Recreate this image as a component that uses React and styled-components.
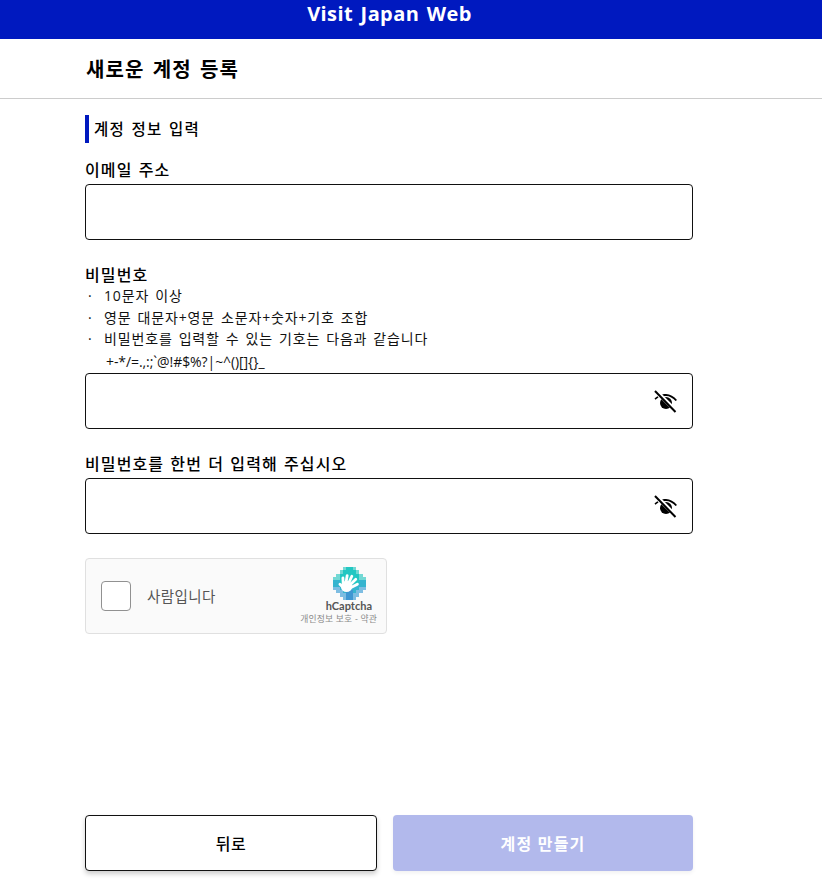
import React from 'react';
import styled, { createGlobalStyle } from 'styled-components';

const GlobalStyle = createGlobalStyle`
    html, body {
        margin: 0;
        padding: 0;
        background: #fff;
        color: #000;
        font-family: 'Open Sans', 'Noto Sans CJK KR', sans-serif;
    }
`;

const Page = styled.div`
    width: 822px;
    height: 892px;
    display: flex;
    flex-direction: column;
    overflow: hidden;
`;

const Banner = styled.header`
    height: 39px;
    flex: none;
    background: #0019bf;
    color: #fff;
    display: flex;
    justify-content: center;
    box-sizing: border-box;
    padding: 0 43px 0 0;
    font-size: 20px;
    line-height: 27px;
    font-weight: 700;
    letter-spacing: 0.4px;
    word-spacing: 2px;
`;

const TitleBar = styled.div`
    height: 60px;
    flex: none;
    box-sizing: border-box;
    border-bottom: 1px solid #cccccc;
    padding: 0 85px 0 86px;
    display: flex;
    align-items: center;
    font-size: 20px;
    font-weight: 700;
    letter-spacing: 1.1px;
    word-spacing: 2px;
`;

const Form = styled.main`
    flex: 1;
    width: 608px;
    margin-left: 85px;
    padding-top: 16px;
    display: flex;
    flex-direction: column;
`;

const SectionTitle = styled.h2`
    margin: 0 0 17px;
    height: 28px;
    border-left: 4px solid #0019bf;
    padding-left: 5px;
    font-size: 15.5px;
    line-height: 28px;
    font-weight: 500;
    letter-spacing: 1.3px;
    word-spacing: 1px;
`;

const Field = styled.div`
    margin-bottom: ${p => p.$gap}px;
    display: flex;
    flex-direction: column;
`;

const Label = styled.label`
    height: 20px;
    font-size: 16px;
    line-height: 20px;
    font-weight: 500;
    letter-spacing: 1.1px;
    word-spacing: 1px;
    white-space: nowrap;
`;

const InputBox = styled.div`
    height: 56px;
    margin-top: 4px;
    box-sizing: border-box;
    border: 1px solid #111;
    border-radius: 4px;
    display: flex;
    align-items: center;
    justify-content: flex-end;
    padding-right: 15px;
`;

const HintList = styled.ul`
    list-style: none;
    margin: 0;
    padding: 0;
    height: 84px;
    font-size: 14px;
    line-height: 21.5px;
    color: #111;
`;

const Hint = styled.li`
    display: flex;
    white-space: nowrap;
    letter-spacing: 0.85px;
    word-spacing: 1.5px;
    &::before {
        content: '·';
        width: 19px;
        padding-left: 3px;
        box-sizing: border-box;
        flex: none;
    }
`;

const Symbols = styled.li`
    padding-left: 21px;
    line-height: 24px;
    font-size: 14px;
    letter-spacing: -0.08px;
    white-space: nowrap;
`;

const Captcha = styled.div`
    width: 302px;
    height: 76px;
    box-sizing: border-box;
    border: 1px solid #e0e0e0;
    border-radius: 4px;
    background: #fafafa;
    display: flex;
    align-items: center;
    padding: 0 9px 0 15px;
`;

const CheckBox = styled.div`
    width: 30px;
    height: 30px;
    box-sizing: border-box;
    border: 1px solid #919191;
    border-radius: 4px;
    background: #fff;
    flex: none;
`;

const CaptchaLabel = styled.span`
    margin: 0 0 2px 16px;
    flex: 1;
    font-size: 14.5px;
    color: #555;
    letter-spacing: 0.4px;
`;

const CaptchaBrand = styled.div`
    align-self: flex-start;
    display: flex;
    flex-direction: column;
    align-items: flex-end;
    padding-top: 8px;
`;

const LogoWrap = styled.div`
    width: 33px;
    height: 33px;
    margin-right: 11px;
`;

const BrandName = styled.span`
    font-family: 'Lato', 'Open Sans', sans-serif;
    font-size: 11px;
    line-height: 12px;
    margin-right: 5px;
    font-weight: 700;
    color: #555;
`;

const BrandLinks = styled.span`
    font-size: 8.8px;
    line-height: 12px;
    margin-top: 1px;
    color: #8a8a8a;
    white-space: nowrap;
    letter-spacing: 0.2px;
`;

const ButtonRow = styled.div`
    margin-top: auto;
    margin-bottom: 21px;
    display: flex;
    gap: 16px;
`;

const Button = styled.button`
    height: 56px;
    box-sizing: border-box;
    width: ${p => (p.$primary ? '300px' : '292px')};
    border: ${p => (p.$primary ? 'none' : '1px solid #111')};
    border-radius: 4px;
    background: ${p => (p.$primary ? '#b2b9ec' : '#fff')};
    color: ${p => (p.$primary ? '#fff' : '#000')};
    font-family: inherit;
    font-size: 16px;
    font-weight: ${p => (p.$primary ? 700 : 500)};
    letter-spacing: ${p => (p.$primary ? '1.2px' : '0.5px')};
    box-shadow: ${p => (p.$primary ? '0 2px 4px rgba(0,0,0,0.06)' : '0 3px 5px rgba(0,0,0,0.2)')};
    padding: 0;
`;

const EyeOff = () => (
    <svg width="24" height="24" viewBox="0 0 24 24" aria-hidden="true">
        <path d="M7 6.500C9 5.300 11 5 13 5c4 0 8 2.400 11 6l-1.400 1C20 9 16.500 7 13 7c-1.500 0-3 .3-4.500 1z" fill="#000" />
        <path d="M1.500 9.500C2.500 8.500 3.500 7.800 4.500 7.200l1 1.300c-1 .6-2 1.300-3 2.300z" fill="#000" />
        <circle cx="13" cy="14" r="6" fill="#000" />
        <path d="M3 2 L24 23" stroke="#fff" strokeWidth="4" />
        <path d="M2 2 L22.500 23" stroke="#000" strokeWidth="2" />
    </svg>
);

// pixelated mark, one letter per block
const LOGO_ROWS = [
    '...abba...',
    '..abbbba..',
    '.abbbbbba.',
    'aabbbbbbaa',
    'ccbbbbbbcc',
    'ccccbbcccc',
    'ddccccccdd',
    '.ddceecdd.',
    '..ddeedd..',
    '...deed...',
];
const LOGO_COLORS = { a: '#72d8d4', b: '#22c7c2', c: '#35b4cf', d: '#7dbde2', e: '#3f97d2' };

const FINGERS = [
    'M2.100 5.200 L3.200 6.300',
    'M3.100 5.200 L3 3.300',
    'M3.900 5 L4.300 2.600',
    'M4.700 5 L5.700 2.800',
    'M5.200 5.400 L6.900 3.700',
    'M5.300 6.300 L7.400 5.200',
];

const HCaptchaLogo = () => (
    <svg width="33" height="33" viewBox="0 0 10 10" aria-hidden="true">
        <g shapeRendering="crispEdges">
            {LOGO_ROWS.map((row, y) =>
                row.split('').map((c, x) =>
                    c === '.' ? null : <rect key={`${x}-${y}`} x={x} y={y} width="1" height="1" fill={LOGO_COLORS[c]} />
                )
            )}
        </g>
        <ellipse cx="4.100" cy="5.900" rx="1.700" ry="1.700" fill="#fff" />
        {FINGERS.map(d => (
            <path key={d} d={d} stroke="#fff" strokeWidth="0.85" strokeLinecap="round" fill="none" />
        ))}
    </svg>
);

export default function App() {
    return (
        <Page>
            <GlobalStyle />
            <Banner>Visit Japan Web</Banner>
            <TitleBar>새로운 계정 등록</TitleBar>
            <Form>
                <SectionTitle>계정 정보 입력</SectionTitle>
                <Field $gap={25}>
                    <Label>이메일 주소</Label>
                    <InputBox />
                </Field>
                <Field $gap={25}>
                    <Label>비밀번호</Label>
                    <HintList>
                        <Hint>10문자 이상</Hint>
                        <Hint>영문 대문자+영문 소문자+숫자+기호 조합</Hint>
                        <Hint>비밀번호를 입력할 수 있는 기호는 다음과 같습니다</Hint>
                        <Symbols>{'+-*/=.,:;`@!#$%?|~^()[]{}_'}</Symbols>
                    </HintList>
                    <InputBox><EyeOff /></InputBox>
                </Field>
                <Field $gap={24}>
                    <Label>비밀번호를 한번 더 입력해 주십시오</Label>
                    <InputBox><EyeOff /></InputBox>
                </Field>
                <Captcha>
                    <CheckBox />
                    <CaptchaLabel>사람입니다</CaptchaLabel>
                    <CaptchaBrand>
                        <LogoWrap><HCaptchaLogo /></LogoWrap>
                        <BrandName>hCaptcha</BrandName>
                        <BrandLinks>개인정보 보호 - 약관</BrandLinks>
                    </CaptchaBrand>
                </Captcha>
                <ButtonRow>
                    <Button>뒤로</Button>
                    <Button $primary>계정 만들기</Button>
                </ButtonRow>
            </Form>
        </Page>
    );
}
